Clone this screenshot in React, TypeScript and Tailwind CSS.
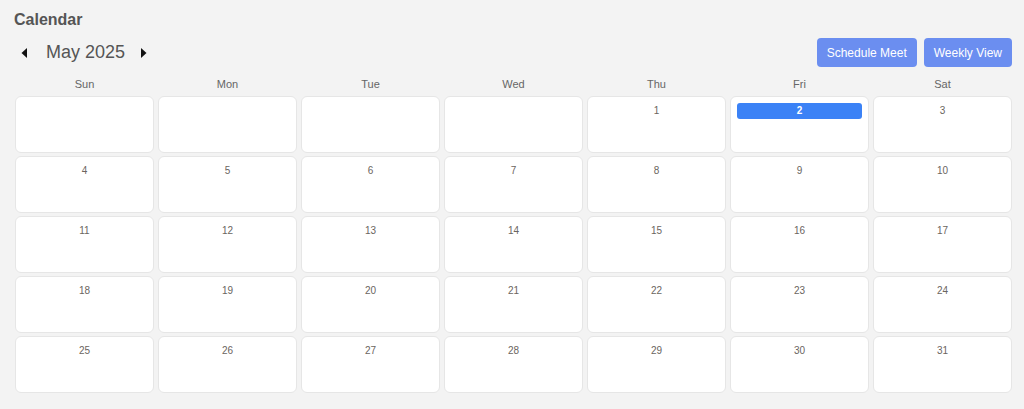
import React from 'react'

const days = ['Sun', 'Mon', 'Tue', 'Wed', 'Thu', 'Fri', 'Sat']

// May 2025 starts on a Thursday
const cells: (number | null)[] = [
  ...Array(4).fill(null),
  ...Array.from({ length: 31 }, (_, i) => i + 1),
]

function Triangle({ dir }: { dir: 'left' | 'right' }) {
  return (
    <svg width="8" height="12" viewBox="0 0 8 12">
      {dir === 'left' ? (
        <path d="M7 1 L1.5 6 L7 11 Z" fill="#111" />
      ) : (
        <path d="M1 1 L6.5 6 L1 11 Z" fill="#111" />
      )}
    </svg>
  )
}

export default function App() {
  const today = 2

  return (
    <div
      className="w-[1024px] h-[409px] bg-[#f3f3f3] pl-[14px] pr-[12px] pt-[10px]"
      style={{ fontFamily: '"Liberation Sans", Arial, sans-serif' }}
    >
      <h1 className="text-[16px] font-bold text-[#555] leading-[20px]">Calendar</h1>

      <div className="flex items-center justify-between mt-[8px] h-[29px]">
        <div className="flex items-center">
          <button className="w-[16px] flex justify-center ml-[2px]">
            <Triangle dir="left" />
          </button>
          <span className="text-[18px] text-[#555] ml-[14px] mr-[11px]">May 2025</span>
          <button className="w-[16px] flex justify-center">
            <Triangle dir="right" />
          </button>
        </div>
        <div className="flex gap-[7px]">
          <button className="h-[29px] px-[10px] rounded-[4px] bg-[#6b8ef0] text-white text-[12px]">
            Schedule Meet
          </button>
          <button className="h-[29px] px-[10px] rounded-[4px] bg-[#6b8ef0] text-white text-[12px]">
            Weekly View
          </button>
        </div>
      </div>

      <div className="grid grid-cols-7 gap-x-[4px] mt-[10px] pl-[1px]">
        {days.map((d) => (
          <div key={d} className="text-center text-[11px] text-[#666] leading-[14px]">
            {d}
          </div>
        ))}
      </div>

      <div className="grid grid-cols-7 gap-x-[4px] gap-y-[3px] mt-[5px] pl-[1px]">
        {cells.map((n, i) => (
          <div
            key={i}
            className="h-[57px] bg-white border border-[#e6e6e6] rounded-[6px] px-[6px] pt-[6px]"
          >
            {n !== null &&
              (n === today ? (
                <div className="h-[16px] rounded-[3px] bg-[#3b82f6] text-white text-[10px] font-bold text-center leading-[16px]">
                  {n}
                </div>
              ) : (
                <div className="text-[10px] text-[#6b6560] text-center leading-[16px]">{n}</div>
              ))}
          </div>
        ))}
      </div>
    </div>
  )
}
